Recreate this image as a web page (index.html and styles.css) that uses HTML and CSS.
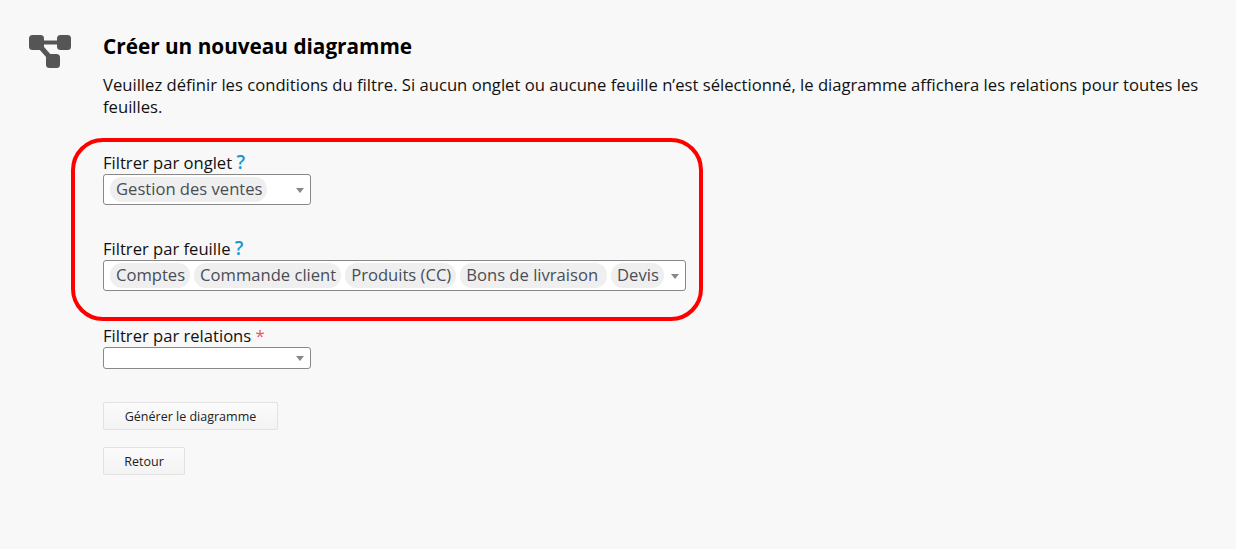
FILE: index.html
```html
<!DOCTYPE html>
<html lang="fr">

<head>
    <meta charset="UTF-8">
    <meta name="viewport" content="width=device-width, initial-scale=1.0">
    <title>Créer un nouveau diagramme</title>
    <link rel="stylesheet" href="styles.css">
</head>

<body>
    <div class="page">
        <svg class="page-icon" width="44" height="37" viewBox="0 0 44 37">
            <line x1="8" y1="10.5" x2="36" y2="10.5" stroke="#555" stroke-width="4"/>
            <line x1="10" y1="12" x2="25" y2="29" stroke="#555" stroke-width="5"/>
            <rect x="1" y="3" width="15" height="15" rx="3.5" fill="#555"/>
            <rect x="29" y="3" width="14" height="15" rx="3.5" fill="#555"/>
            <rect x="18" y="22" width="14" height="14" rx="3.5" fill="#555"/>
        </svg>

        <div class="content">
            <h1>Créer un nouveau diagramme</h1>
            <p class="intro">Veuillez définir les conditions du filtre. Si aucun onglet ou aucune feuille n’est sélectionné, le diagramme affichera les relations pour toutes les feuilles.</p>

            <div class="field field-tab">
                <label>Filtrer par onglet <span class="help">?</span></label>
                <div class="select select-short">
                    <span class="tag">Gestion des ventes</span>
                    <span class="arrow"></span>
                </div>
            </div>

            <div class="field field-sheet">
                <label>Filtrer par feuille <span class="help">?</span></label>
                <div class="select select-wide">
                    <span class="tag">Comptes</span>
                    <span class="tag">Commande client</span>
                    <span class="tag">Produits (CC)</span>
                    <span class="tag tag-long">Bons de livraison</span>
                    <span class="tag">Devis</span>
                    <span class="arrow"></span>
                </div>
            </div>

            <div class="field field-relation">
                <label>Filtrer par relations <span class="required">*</span></label>
                <div class="select select-short select-empty">
                    <span class="arrow"></span>
                </div>
            </div>

            <div class="buttons">
                <button class="btn btn-generate">Générer le diagramme</button>
                <button class="btn btn-back">Retour</button>
            </div>
        </div>
    </div>

    <div class="highlight"></div>
</body>

</html>
```

FILE: styles.css
```css
/* Page */
body {
    margin: 0;
    height: 549px;
    overflow: hidden;
    background-color: #f8f8f8;
    color: #111;
    font-family: "Open Sans", sans-serif;
    font-size: 16.6px;
    line-height: 22px;
}
.page {
    display: flex;
    padding: 32px 30px 0 28px;
}
.page-icon {
    flex: none;
    margin-right: 31px;
}
.content {
    flex: 1;
}
h1 {
    margin: 1px 0 14px;
    font-size: 20.75px;
    line-height: 27px;
    font-weight: 700;
    color: #000;
}
.intro {
    margin: 0 0 34px;
    font-size: 16.65px;
}

/* Filtres */
.field label {
    display: block;
    height: 22px;
    line-height: 22px;
}
.field-sheet {
    margin-top: 33px;
}
.field-relation {
    margin-top: 34px;
}
.help {
    color: #1b95d4;
    font-weight: 600;
    font-size: 19px;
    line-height: 20px;
}
.required {
    color: #ee5555;
}
.select {
    position: relative;
    display: flex;
    align-items: center;
    gap: 4px;
    height: 31px;
    box-sizing: border-box;
    padding: 0 6px;
    border: 1px solid #888;
    border-radius: 3px;
    background-color: #fff;
}
.select-short {
    width: 208px;
}
.select-wide {
    width: 583px;
}
.select-empty {
    height: 22px;
}
.tag {
    padding: 0 5px 0 6px;
    height: 25px;
    line-height: 24px;
    border-radius: 12px;
    background-color: #efefef;
    color: #494d55;
}
.tag-long {
    padding-right: 9px;
}
.arrow {
    position: absolute;
    right: 6px;
    top: 50%;
    margin-top: -2px;
    border-left: 4px solid transparent;
    border-right: 4px solid transparent;
    border-top: 5px solid #888;
}

/* Boutons */
.buttons {
    display: flex;
    flex-direction: column;
    align-items: flex-start;
    gap: 17px;
    margin-top: 33px;
}
.btn {
    height: 28px;
    padding: 0;
    border: 1px solid #e2e2e2;
    border-radius: 2px;
    background: linear-gradient(#fbfbfb, #f3f3f3);
    color: #222;
    font-family: "Open Sans", sans-serif;
    font-size: 12.5px;
}
.btn-generate {
    width: 175px;
}
.btn-back {
    width: 82px;
}

/* Annotation */
.highlight {
    position: absolute;
    left: 71px;
    top: 138px;
    width: 624px;
    height: 175px;
    border: 4px solid #f00;
    border-radius: 32px;
}
```
